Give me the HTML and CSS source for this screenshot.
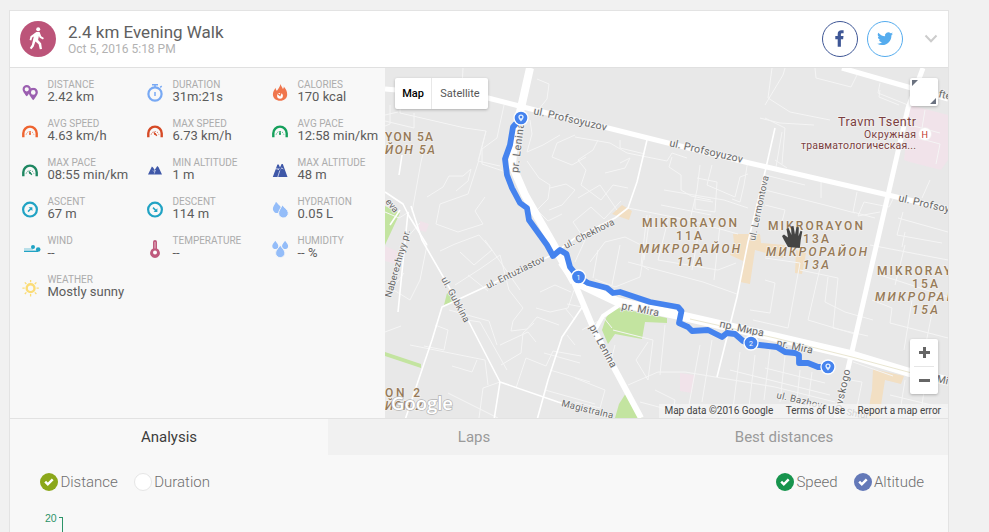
FILE: index.html
```html
<!DOCTYPE html>
<html lang="en">
<head>
    <meta charset="UTF-8">
    <meta name="viewport" content="width=device-width, initial-scale=1.0">
    <title>2.4 km Evening Walk</title>
    <link rel="stylesheet" href="styles.css">
</head>
<body class="page">
    <!-- icon sprite -->
    <svg class="sprite" width="0" height="0">
        <symbol id="i-gauge" viewBox="0 0 16 16">
            <path d="M1.3 13.200V9.300a6.700 6.700 0 0 1 13.400 0v3.900" fill="none" stroke="currentColor" stroke-width="2.400"/>
            <path d="M4.200 10.500a3.900 3.900 0 0 1 7.600 0" fill="none" stroke="currentColor" stroke-width="1" stroke-dasharray="1 1.400"/>
            <circle cx="8" cy="10" r="1"/>
        </symbol>
        <symbol id="i-check" viewBox="0 0 18 18">
            <path d="M5.200 8.600l2.600 2.700 4.900-4.900" fill="none" stroke="#fff" stroke-width="2.500"/>
        </symbol>
        <symbol id="i-pin" viewBox="0 0 10 12">
            <path fill-rule="evenodd" d="M5 0a4.400 4.400 0 0 0-4.400 4.400C.6 7.200 5 12 5 12s4.400-4.800 4.400-7.600A4.400 4.400 0 0 0 5 0zm0 2.300a2.200 2.200 0 1 1 0 4.400 2.200 2.200 0 0 1 0-4.400z"/>
        </symbol>
        <symbol id="i-drop" viewBox="0 0 10 12">
            <path d="M5 0C3.800 2.600.6 4.800.6 7.600a4.400 4.400 0 0 0 8.800 0C9.400 4.800 6.200 2.600 5 0z"/>
        </symbol>
    </svg>

    <div class="card">
        <header class="head">
            <div class="head__type">
                <svg viewBox="0 0 36 36" width="36" height="36" fill="#fff">
                    <circle cx="18.200" cy="8.300" r="2"/>
                    <path d="M16.300 10.900l3.300.2 1.600 4.200 2.700 1.700-.9 1.500-3.300-1.800-.8-1.700-.8 4.100 3 3.200.9 5.600-2.200.3-1.200-4.900-3.200-2.900-1.700 5-2.300 2.800-1.600-1.200 2.100-3.200 1.900-8.300-1.600.9-.9 3.100-1.700-.4.900-3.900z"/>
                </svg>
            </div>
            <div class="head__text">
                <h1 class="head__title">2.4 km Evening Walk</h1>
                <p class="head__date">Oct 5, 2016 5:18 PM</p>
            </div>
            <div class="head__share">
                <a class="share share--fb">
                    <svg viewBox="0 0 34 34" width="34" height="34" fill="currentColor"><path d="M14.700 24.800v-7.600h-2.400v-3.200h2.400v-2c0-2.600 1.500-3.800 3.700-3.800 1.100 0 1.900.1 2.200.1v3h-1.400c-1.100 0-1.300.5-1.300 1.300v1.400h2.600l-.4 3.200h-2.200v7.600z"/></svg>
                </a>
                <a class="share share--tw">
                    <svg viewBox="0 0 34 34" width="34" height="34" fill="currentColor"><path transform="translate(9.200 8.800) scale(.66)" d="M24 4.600a10 10 0 0 1-2.800.8 5 5 0 0 0 2.200-2.700c-1 .6-2 1-3.100 1.200a4.900 4.900 0 0 0-8.400 4.500C7.700 8.100 4.100 6.100 1.700 3.100a4.900 4.900 0 0 0 1.500 6.600c-.8 0-1.600-.2-2.200-.6 0 2.300 1.600 4.400 3.900 4.900-.7.200-1.500.2-2.200.1.600 1.900 2.400 3.400 4.600 3.400A9.900 9.900 0 0 1 0 19.500a14 14 0 0 0 7.500 2.200c9.100 0 14.300-7.700 14-14.600 1-.7 1.800-1.600 2.500-2.500z"/></svg>
                </a>
                <svg class="head__more" viewBox="0 0 14 10" width="14" height="10"><path d="M1.500 1.500L7 7.200l5.500-5.700" fill="none" stroke="#ccc" stroke-width="2"/></svg>
            </div>
        </header>

        <div class="summary">
            <div class="stats">
                <div class="stat">
                    <svg class="stat__ico" viewBox="0 0 16 16" fill="#9b5fb0"><use href="#i-pin" x="0" y="0" width="9.500" height="11.500"/><use href="#i-pin" x="6" y="2.500" width="10.500" height="13"/></svg>
                    <div class="stat__body"><p class="stat__label">Distance</p><p class="stat__value">2.42 km</p></div>
                </div>
                <div class="stat">
                    <svg class="stat__ico" viewBox="0 0 16 16" fill="none" stroke="#78a9f4"><circle cx="8" cy="9" r="6.600" stroke-width="2.200"/><path d="M5 -.3h6M8 0v2M13.200 2.300l1.500-1.200M8 7v4" stroke-width="1.500"/></svg>
                    <div class="stat__body"><p class="stat__label">Duration</p><p class="stat__value">31m:21s</p></div>
                </div>
                <div class="stat">
                    <svg class="stat__ico" viewBox="0 0 16 16"><path fill="#f0764d" d="M8.400-1c.4 2 2 3.200 2.500 5 .7-.5 1-1.500.9-2.500 1.700 2 3.600 4.700 3.400 8.200-.2 3.600-3 6-7 6s-7.100-2.300-7.300-6C.8 7.200 2.200 5 3.600 2.800c.1 1.300.5 2.400 1.300 3C6 4 8.200 2 8.400-1z"/><circle cx="8" cy="10.800" r="2.900" fill="#fff"/><path d="M6 9l2 1.500 1-2.500" stroke="#f0764d" fill="none"/></svg>
                    <div class="stat__body"><p class="stat__label">Calories</p><p class="stat__value">170 kcal</p></div>
                </div>
                <div class="stat">
                    <svg class="stat__ico stat__ico--orange"><use href="#i-gauge"/><path d="M8 7.300v3" stroke="currentColor"/></svg>
                    <div class="stat__body"><p class="stat__label">Avg speed</p><p class="stat__value">4.63 km/h</p></div>
                </div>
                <div class="stat">
                    <svg class="stat__ico stat__ico--red"><use href="#i-gauge"/><path d="M6.800 8.400l3 3.300" stroke="currentColor"/></svg>
                    <div class="stat__body"><p class="stat__label">Max speed</p><p class="stat__value">6.73 km/h</p></div>
                </div>
                <div class="stat">
                    <svg class="stat__ico stat__ico--green"><use href="#i-gauge"/><path d="M8 7.300v3" stroke="currentColor"/></svg>
                    <div class="stat__body"><p class="stat__label">Avg pace</p><p class="stat__value">12:58 min/km</p></div>
                </div>
                <div class="stat">
                    <svg class="stat__ico stat__ico--teal"><use href="#i-gauge"/><path d="M6.800 8.400l3 3.300" stroke="currentColor"/></svg>
                    <div class="stat__body"><p class="stat__label">Max pace</p><p class="stat__value">08:55 min/km</p></div>
                </div>
                <div class="stat">
                    <svg class="stat__ico" viewBox="0 0 16 16"><path fill="#3f58a8" d="M1 11.500L4.900 3.500l1.200 1 1.600 2.500L10.300 3l1.300 1.200L15 11.500z"/><path d="M6 7.500l1 1 1.300-1.500-1 3.500" fill="none" stroke="#dfe5f5" stroke-width=".7"/></svg>
                    <div class="stat__body"><p class="stat__label">Min altitude</p><p class="stat__value">1 m</p></div>
                </div>
                <div class="stat">
                    <svg class="stat__ico" viewBox="0 0 16 16"><path fill="#3f58a8" d="M.8 14L5.400 1.500h1.300L8 4.500l1.600-3.500h1.200L15.500 14z"/><path d="M3.700 6.500l1.500-1.200 1 1.700 1-2M8.600 6.200l1.400-1.400 1.200 1.400M7.800 7.500L5.800 14" fill="none" stroke="#dfe5f5" stroke-width=".8"/></svg>
                    <div class="stat__body"><p class="stat__label">Max altitude</p><p class="stat__value">48 m</p></div>
                </div>
                <div class="stat">
                    <svg class="stat__ico" viewBox="0 0 16 16" stroke="#21a3c4" fill="none"><circle cx="8" cy="7.600" r="6.900" stroke-width="2.200"/><path d="M6 9.600l3-3" stroke-width="1.500"/><path d="M6.600 5.200h3.800V9z" fill="#21a3c4" stroke="none"/></svg>
                    <div class="stat__body"><p class="stat__label">Ascent</p><p class="stat__value">67 m</p></div>
                </div>
                <div class="stat">
                    <svg class="stat__ico" viewBox="0 0 16 16" stroke="#21a3c4" fill="none"><circle cx="8" cy="7.600" r="6.900" stroke-width="2.200"/><path d="M6 5.600l3 3" stroke-width="1.500"/><path d="M6.600 10h3.800V6.200z" fill="#21a3c4" stroke="none"/></svg>
                    <div class="stat__body"><p class="stat__label">Descent</p><p class="stat__value">114 m</p></div>
                </div>
                <div class="stat">
                    <svg class="stat__ico" viewBox="0 0 16 16" fill="#94bdf9"><use href="#i-drop" x="0" y="-.5" width="9.500" height="11.500" transform="rotate(-8 5 5)"/><use href="#i-drop" x="5.600" y="2.800" width="11" height="13.200" stroke="#f7f7f7" stroke-width=".8" transform="rotate(-8 11 9)"/></svg>
                    <div class="stat__body"><p class="stat__label">Hydration</p><p class="stat__value">0.05 L</p></div>
                </div>
                <div class="stat">
                    <svg class="stat__ico" viewBox="0 0 16 16" fill="none" stroke="#21a3c4"><path d="M2 8h9" stroke-width="1" stroke="#7cc7da"/><path d="M2 10.300h14" stroke-width="1.400"/><circle cx="11" cy="6" r="2" fill="#21a3c4" stroke="none"/><circle cx="16.200" cy="8.500" r="2.300" fill="#21a3c4" stroke="none"/></svg>
                    <div class="stat__body"><p class="stat__label">Wind</p><p class="stat__value">--</p></div>
                </div>
                <div class="stat">
                    <svg class="stat__ico" viewBox="0 0 16 16"><path fill="#bf5a7d" d="M6 1a2 2 0 0 1 4 0v6.600a4.900 4.900 0 1 1-4 0z"/><circle cx="8" cy="11.600" r="2" fill="#fff"/><path d="M8 1v6.500" stroke="#e6b9c8" stroke-width="1"/></svg>
                    <div class="stat__body"><p class="stat__label">Temperature</p><p class="stat__value">--</p></div>
                </div>
                <div class="stat">
                    <svg class="stat__ico" viewBox="0 0 16 16" fill="#94bdf9"><use href="#i-drop" x="-.2" y="-.3" width="7" height="8.400"/><use href="#i-drop" x="9.600" y="-.3" width="7" height="8.400"/><use href="#i-drop" x="3" y="4" width="10.500" height="12.600" stroke="#f7f7f7" stroke-width=".8"/></svg>
                    <div class="stat__body"><p class="stat__label">Humidity</p><p class="stat__value">-- %</p></div>
                </div>
                <div class="stat">
                    <svg class="stat__ico" viewBox="0 0 16 16" fill="none" stroke="#fbdc76"><circle cx="8.600" cy="8.200" r="3.900" stroke-width="2.400"/><path d="M8.600 0v2.300M8.600 14.100v2.300M.4 8.200h2.300M14.500 8.200h2.300M2.800 2.400l1.600 1.600M12.800 12.400l1.600 1.600M2.800 14l1.600-1.600M12.800 4l1.600-1.600" stroke-width="1.300"/></svg>
                    <div class="stat__body"><p class="stat__label">Weather</p><p class="stat__value">Mostly sunny</p></div>
                </div>
            </div>

            <div class="map">
                <svg class="map__canvas" viewBox="385 68 563 350" width="563" height="350">
                    <rect x="385" y="68" width="563" height="350" fill="#e8e8e8"/>
                    <!-- parks and areas -->
                    <g fill="#c3e4a0">
                        <path d="M385 206l15 7-8 17-7 15z"/>
                        <path d="M385 352l36 12v4l-36-12z"/>
                        <path d="M444 305l3-12 5 3 1 6z"/>
                        <path d="M610 312l8-4 49 10v5l-22-1-3 17-27-5-7 10-6-14 4-12z"/>
                        <path d="M626 393l16 25h-27l4-14z"/>
                    </g>
                    <g fill="#f1e3ea">
                        <path d="M910 105l38 10v45l-7 10-31-8-6-2z"/>
                        <path d="M680 373l15 2-3 18-12-2zM420 221l9 3-3 8-8-2zM385 246l12 5v13l-12-3z"/>
                    </g>
                    <g fill="#f2dfc3">
                        <path d="M612 214l10-9 10 6-3 9z"/>
                        <path d="M733 234l27 0 1 9 24 2-2 13-28-8-5 34-10-2 3-21-13-6 4-12z"/>
                        <path d="M796 250l10 3-4 21-7-1z"/>
                        <path d="M873 369l31 7-3 8-16-4-6 38h-12l5-28z"/>
                    </g>
                    <!-- small streets -->
                    <g class="streets">
                        <path d="M390 105v19l-5 2M400 83v30l65 15 21 3-8 32-10 31-28 10-4 20 22 8 25-8-8-13 10-14M398 112l-13 3M414 113v15l-29-7M463 68l-2 38M486 131l-8 30 22 5M504 105l-7 33-15 11v15l24 8M424 150l-3 12-9 50M427 197l16-10 6-11 14 0 8-7-3 12-12 10"/>
                        <path d="M537 79l12 5-2 15-8 10M530 120l2 14-5 18 16-7 17-10M527 161l12 17 11 7-2 14-11 11 11 11 14-7M575 135l-18 8-5 14 20 8 14-8M550 188l16-4 9 6-13 15-13 5"/>
                        <path d="M385 212l14 6 10-6M405 240l15-17M427 245l-7 35-10 20-18-11 12-16M440 251l15-7 24-9 13 15-18 15-14-13M455 285l25-16 20-14 9 35 14 18-10 13-2 10 16-2 10-12 22 8M468 275l20 16M485 240l35 50M449 310l40 11 8 24M435 325l13 5-4 20-20-4M467 320l13 2 27 48M500 345l28-13 8 10M410 345l75 15 3 25M452 366l20 6 5-12M500 382l-17 6-4 30M385 332l16-6M448 393l50 25M501 365l20-12 2-20 11-10M516 388l10-30 20 8 7-15 28 5M544 353l36 10M550 370l40 12M545 390l50 14M536 308l14 4 18-4 6-18M567 304l15 3 13 30"/>
                        <path d="M540 292l15-7 16 7M590 262l15-20 20-5 20 10-5 30-25 10-20-8M647 215l-6 50 8 5M575 262l10-22-12-18 18-15 13 12 17-18"/>
                        <path d="M575 137l35 6 17 10 40 8 5-8 15 5M620 140v8l25 6M598 140l-5 10-15 10 8 10-5 15 20 15 12-15 15 3M578 198l22-13 17 25M605 173l20-5 5-10-10 5M672 157l-3 10 12 8v15l10 6 20 4M700 165l-3 25-7 30M697 178l20 4-2 30-20-3v-10l18 3M664 190l60 10 24 8M661 205l50 10M712 165l-5 20 28 12 5-20 8-3M748 160l-4 25-4 17-8-3M628 208l60 12 50 14M650 215l-6 45M668 220l-10 40 60 10 18-7M700 225l-8 45M720 225l-6 55M628 262l75 20 34 12M620 245l-8 40M598 250l-5 28"/>
                        <path d="M765 105l18-30 2-7M760 118l20 5 34 2M772 68l-4 30 22 14 40 8M815 68l1 10 35 9 6-12M880 83l-2 10 30 12M880 90l-1 7 20 8M765 118l20 10-3 36M782 132l-6 35M775 160l12 8M895 195l-6 12-25-5-6 14 22-4M765 175l40 10M765 190l60 15 30 8M821 178v20M765 205l20 5-5 20M857 192l-4 20 22 6M903 212l-6 23 45 8M905 232l-3 15M898 218l50 14M930 180l-8 18"/>
                        <path d="M765 258l35 5-12 65-35-8M800 270l38 8-5 50 35 8M820 268l-12 52 50 15M828 277l-3 25 20 10 28 8M870 245l78 15M872 300l20 8-2 15 58 15M880 275l68 22M905 245l-10 40M912 300l-8 50M935 298l-10 50M765 280l10 3-5 30-20-3"/>
                        <path d="M613 330l40 10-5 40-12-20 12-18M628 385l30-13 27 0 90 15 60 15M665 325l-5 50M700 345l-12 65M712 340l-10 62M655 390l20 10-3 18M640 402l60 16M740 352l-8 65M755 355l-7 60M770 350l-6 50M785 356l-5 46M800 370l-5 50M812 372l-5 40M765 368l60 15M730 370l100 25M615 345l-5 20M575 378l30 12-5 18-25-6"/>
                        <path d="M853 362l40 14M850 380l12 2-6 30M905 380l-6 38M925 385l-5 33M890 395l58 14M575 320l-10-12M582 330l22-12 8 10M575 345l-8-10M910 125l30 8M918 138l22 6-4 20M925 110l-5 30"/>
                    </g>
                    <!-- secondary roads -->
                    <g class="roads roads--mid">
                        <path d="M385 192l18 12 6 12 18 29M402 155l-3 20"/>
                        <path d="M411 206l11 34 46 80 32 62 58 20 85 26"/>
                        <path d="M405 420l27-80 10-33 43-20 67-32 23-17 40-20 13-10 9-26 10-42"/>
                        <path d="M585 303l-23 34-14 43-11 40M500 382l-6 38"/>
                        <path d="M775 128l-10 44-17 70-11 55-20 80"/>
                        <path d="M390 225l10-15M408 212l-10 100"/>
                    </g>
                    <!-- main roads -->
                    <g class="roads roads--main">
                        <path d="M385 89l103 9 47 12 73 18 60 15 77 19 143 33 60 14" stroke-width="5"/>
                        <path d="M842 68l66 19 40 12" stroke-width="5"/>
                        <path d="M923 68l-15 40-20 87-38 165-14 60" stroke-width="5"/>
                        <path d="M530 68l-9 40-6 25-3 32 13 30 27 47 22 40 21 50 46 86" stroke-width="6"/>
                        <path d="M530 68l-9 40-6 25-3 32 13 30 27 47 22 40" stroke-width="8"/>
                        <path d="M562 262l14 20 42 20 64 14 93 21 77 18 56 17 45 10" stroke-width="9"/>
                        <path d="M595 330l8-14 15-10" stroke-width="4"/>
                    </g>
                    <path d="M690 319l85 19 77 19 56 15 40 9" fill="none" stroke="#e3dfc5" stroke-width=".8"/>

                    <!-- district names -->
                    <g class="district">
                        <text x="385" y="141" textLength="48">YON 5A</text>
                        <text x="385" y="154" textLength="50" font-style="italic">ЙОН 5А</text>
                        <text x="642" y="227" textLength="95">MIKRORAYON</text>
                        <text x="676" y="240" textLength="26">11A</text>
                        <text x="639" y="253" textLength="101" font-style="italic">МИКРОРАЙОН</text>
                        <text x="677" y="266" textLength="26" font-style="italic">11А</text>
                        <text x="768" y="230" textLength="95">MIKRORAYON</text>
                        <text x="803" y="243" textLength="26">13A</text>
                        <text x="766" y="256" textLength="101" font-style="italic">МИКРОРАЙОН</text>
                        <text x="803" y="269" textLength="26" font-style="italic">13А</text>
                        <text x="877" y="275" textLength="95">MIKRORAYON</text>
                        <text x="912" y="288" textLength="26">15A</text>
                        <text x="875" y="301" textLength="101" font-style="italic">МИКРОРАЙОН</text>
                        <text x="912" y="314" textLength="26" font-style="italic">15А</text>
                        <text x="385" y="397" textLength="35">ON 2</text>
                        <text x="385" y="410" textLength="37" font-style="italic">ЙОН 2</text>
                    </g>
                    <g class="poi" text-anchor="end">
                        <text x="916" y="126" font-size="12.500" textLength="78">Travm Tsentr</text>
                        <text x="916" y="137.500" font-size="10.500" textLength="52">Окружная</text>
                        <text x="916" y="149" font-size="10.500" textLength="115">травматологическая...</text>
                        <circle cx="925" cy="134" r="6" fill="#fff"/>
                        <text x="928" y="137.500" font-size="9" fill="#c0392b" stroke="none">H</text>
                    </g>

                    <!-- street names -->
                    <g class="street">
                        <text transform="translate(533 114) rotate(13)" textLength="75">ul. Profsoyuzov</text>
                        <text transform="translate(669 146) rotate(13)" textLength="75">ul. Profsoyuzov</text>
                        <text transform="translate(898 201) rotate(13)" textLength="75">ul. Profsoyuzov</text>
                        <text transform="translate(938 97) rotate(13)">fteyu</text>
                        <text transform="translate(518 173) rotate(-83)" textLength="50">pr. Lenina</text>
                        <text transform="translate(566 249) rotate(-27)" textLength="55" font-size="9.500">ul. Chekhova</text>
                        <text transform="translate(488 289) rotate(-26)" textLength="64" font-size="9.500">ul. Entuziastov</text>
                        <text transform="translate(441 279) rotate(62)" textLength="50" font-size="9.500">ul. Gubkina</text>
                        <text transform="translate(391 298) rotate(-74)" textLength="70" font-size="9.500">Naberezhnyy pr.</text>
                        <text transform="translate(385 202) rotate(50)" font-size="9.500">eva</text>
                        <text transform="translate(755 241) rotate(-78)" textLength="66" font-size="9.500">ul. Lermontova</text>
                        <text transform="translate(621 309) rotate(11)" textLength="38">pr. Mira</text>
                        <text transform="translate(719 327) rotate(12)" textLength="45">пр. Мира</text>
                        <text transform="translate(776 346) rotate(12)" textLength="37">pr. Mira</text>
                        <text transform="translate(936 382) rotate(12)">Mira</text>
                        <text transform="translate(589 327) rotate(62)" textLength="47">pr. Lenina</text>
                        <text transform="translate(561 406) rotate(14)" font-size="9.500" textLength="53">Magistralna</text>
                        <text transform="translate(776 398) rotate(13)" font-size="9.500" textLength="52">ul. Bazhova</text>
                        <text transform="translate(841 411) rotate(-77)" textLength="42">ovskogo</text>
                        <text transform="translate(846 415) rotate(10)" font-size="9.500">Shtur</text>
                    </g>

                    <!-- walked track -->
                    <path class="track" d="M521 118l-8 9-3 18-5 14 2 16 5 13 8 15 7 5 2 12 18 25 6 11 7-6 6.500 4 3.500 13 8 10 10 6 19 5 6 5 7-1 30 10 28 5 3.500 4-2.500 12 9 4 4 4 16-1 14 7 5-4 8 1 8 7 8 3 26 3 8 5 10 1 4 2v8h9l10 4 10 0"/>
                    <g class="marks">
                        <circle cx="521" cy="118" r="7"/>
                        <circle cx="578.500" cy="277" r="7"/>
                        <circle cx="751" cy="343" r="7"/>
                        <circle cx="828" cy="367" r="7"/>
                        <use href="#i-pin" x="518" y="114" width="6" height="8" class="marks__pin"/>
                        <use href="#i-pin" x="825" y="363" width="6" height="8" class="marks__pin"/>
                        <text x="578.500" y="279.500">1</text>
                        <text x="751" y="345.500">2</text>
                    </g>
                    <text x="391" y="410" class="glogo" textLength="62" lengthAdjust="spacingAndGlyphs">Google</text>
                    <!-- grab cursor -->
                    <path fill="#444" d="M788 247l-4-7-2-4 2-1.500 4 3-1.500-8.500 2-1 3 7-.5-8.500 2.500-.5 1.500 8.500 1.500-7.500 2.300.3-.3 9 2-5.500 1.800.7-1.500 8-1 8.500z"/>
                </svg>

                <div class="map__types">
                    <span class="map__type map__type--active">Map</span>
                    <span class="map__type">Satellite</span>
                </div>
                <div class="map__full">
                    <svg width="28" height="28" viewBox="0 0 28 28" fill="#6b7280"><path d="M2 2h6L2 8zM26 20v6h-6z"/></svg>
                </div>
                <div class="map__zoom">
                    <span class="zoom zoom--in"></span>
                    <span class="zoom zoom--out"></span>
                </div>
                <div class="map__copy">
                    <span>Map data ©2016 Google</span>
                    <span>Terms of Use</span>
                    <span>Report a map error</span>
                </div>
            </div>
        </div>

        <nav class="tabs">
            <a class="tab tab--active">Analysis</a>
            <a class="tab">Laps</a>
            <a class="tab">Best distances</a>
        </nav>

        <div class="filters">
            <div class="filters__group">
                <label class="check"><svg class="check__box check__box--olive"><use href="#i-check"/></svg>Distance</label>
                <label class="check"><svg class="check__box check__box--empty"></svg>Duration</label>
            </div>
            <div class="filters__group">
                <label class="check"><svg class="check__box check__box--green"><use href="#i-check"/></svg>Speed</label>
                <label class="check"><svg class="check__box check__box--blue"><use href="#i-check"/></svg>Altitude</label>
            </div>
        </div>

        <div class="chart">
            <span class="chart__tick">20</span>
            <div class="chart__axis"></div>
        </div>
    </div>
</body>
</html>
```

FILE: styles.css
```css
*, ::after, ::before {
    box-sizing: border-box;
}
body{
    margin: 0;
    font-family: Roboto, sans-serif;
}
h1,p{
    margin: 0;
    font-weight: 400;
}
.page{
    background: #f1f1f1;
    padding: 10px 0 0 9px;
    height: 532px;
    overflow: hidden;
}
.sprite{
    position: absolute;
}
.card{
    width: 940px;
    height: 522px;
    border: 1px solid #e3e3e3;
    border-bottom: 0;
    background: #f8f8f8;
}

.head{
    display: flex;
    align-items: center;
    height: 57px;
    padding: 0 10px;
    background: #fff;
    border-bottom: 1px solid #e0e0e0;
}
.head__type{
    width: 36px;
    height: 36px;
    border-radius: 50%;
    background: #bc5479;
}
.head__text{
    margin-left: 12px;
    padding-bottom: 1px;
}
.head__title{
    font-size: 17px;
    line-height: 20px;
    color: #606060;
}
.head__date{
    font-size: 12px;
    line-height: 14px;
    color: #b2b2b2;
}
.head__share{
    display: flex;
    align-items: center;
    gap: 9px;
    margin-left: auto;
}
.head__more{
    margin-left: 12px;
}
.share{
    width: 36px;
    height: 36px;
    border: 1px solid;
    border-radius: 50%;
}
.share svg{
    display: block;
}
.share--fb{
    color: #3f5796;
}
.share--tw{
    color: #55acee;
}

.summary{
    display: flex;
    height: 351px;
    border-bottom: 1px solid #e2e2e2;
}
.stats{
    width: 375px;
    padding: 10px 0 0 12px;
    display: grid;
    grid-template-columns: repeat(3, 125px);
    grid-auto-rows: 26px;
    row-gap: 13px;
    align-content: start;
}
.stat{
    display: flex;
    gap: 9.5px;
}
.stat__ico{
    flex-shrink: 0;
    width: 16px;
    height: 16px;
    margin-top: 7px;
    overflow: visible;
    stroke-width: 1.4;
}
.stat__ico--orange{
    color: #ee6430;
    fill: #ee6430;
}
.stat__ico--red{
    color: #d64a26;
    fill: #d64a26;
}
.stat__ico--green{
    color: #16a05c;
    fill: #16a05c;
}
.stat__ico--teal{
    color: #1f8762;
    fill: #1f8762;
}
.stat__label{
    font-size: 10px;
    line-height: 13px;
    color: #acacac;
    text-transform: uppercase;
    white-space: nowrap;
}
.stat__value{
    margin-top: -1px;
    font-size: 13px;
    line-height: 13px;
    color: #5c5c5c;
    white-space: nowrap;
}

.map{
    position: relative;
    width: 563px;
    height: 350px;
    overflow: hidden;
}
.map__canvas{
    display: block;
}
.streets{
    fill: none;
    stroke: #f5f5f5;
    stroke-width: 1;
}
.roads{
    fill: none;
    stroke: #fff;
    stroke-linejoin: round;
}
.roads--mid{
    stroke-width: 1.6;
}
.district{
    font-size: 12px;
    font-weight: 500;
    fill: #967a58;
    stroke: #f3f0ec;
    stroke-width: 1.5px;
    paint-order: stroke;
}
.poi{
    fill: #7a3f3f;
    stroke: #f3f0f0;
    stroke-width: 1.5px;
    paint-order: stroke;
}
.street{
    font-size: 10.5px;
    fill: #686868;
    stroke: #f2f2f2;
    stroke-width: 1.5px;
    paint-order: stroke;
}
.track{
    fill: none;
    stroke: #4583ee;
    stroke-width: 5.8;
    stroke-linejoin: round;
}
.marks circle{
    fill: #4583ee;
    stroke: #fff;
    stroke-width: 1.3;
}
.marks text{
    font-size: 7px;
    fill: #fff;
    text-anchor: middle;
}
.marks__pin{
    fill: #e3f0ff;
}
.glogo{
    font-family: "Open Sans", sans-serif;
    font-size: 18px;
    font-weight: 600;
    fill: #fff;
    stroke: #b5b5b5;
    stroke-width: 1.4px;
    paint-order: stroke;
}

.map__types,
.map__full,
.map__zoom{
    position: absolute;
    background: #fff;
    border-radius: 2px;
    box-shadow: 0 1px 3px rgba(0, 0, 0, .25);
}
.map__types{
    top: 10px;
    left: 10px;
    display: flex;
    height: 31px;
    font-size: 11px;
    line-height: 31px;
}
.map__type{
    width: 56px;
    text-align: center;
    color: #565656;
}
.map__type--active{
    width: 37px;
    border-right: 1px solid #e8e8e8;
    color: #000;
    font-weight: 500;
}
.map__full{
    top: 10px;
    right: 10px;
    width: 28px;
    height: 28px;
}
.map__zoom{
    right: 10px;
    bottom: 24px;
    width: 28px;
    height: 55px;
}
.zoom{
    display: flex;
    align-items: center;
    justify-content: center;
    height: 27px;
}
.zoom::before{
    content: "";
    width: 11px;
    height: 11px;
    background: linear-gradient(#666, #666) center / 11px 3px no-repeat;
}
.zoom--in::before{
    background: linear-gradient(#666, #666) center / 11px 3px no-repeat, linear-gradient(#666, #666) center / 3px 11px no-repeat;
}
.zoom--out{
    margin: 0 4px;
    border-top: 1px solid #e6e6e6;
}
.map__copy{
    position: absolute;
    right: 0;
    bottom: 0;
    display: flex;
    gap: 12.5px;
    height: 14px;
    padding: 0 7px 0 5px;
    font-size: 10px;
    line-height: 14px;
    color: #444;
    background: rgba(245, 245, 245, .75);
    white-space: nowrap;
}

.tabs{
    display: grid;
    grid-template-columns: 318px 292px 328px;
    height: 34px;
    line-height: 36px;
    font-size: 15px;
    text-align: center;
}
.tab{
    background: #f1f1f1;
    color: #9a9a9a;
}
.tab--active{
    background: #f8f8f8;
    color: #3c3c3c;
}

.filters{
    display: flex;
    justify-content: space-between;
    padding: 20px 24px 0 30px;
}
.filters__group{
    display: flex;
    gap: 16px;
}
.check{
    display: flex;
    align-items: center;
    gap: 2.4px;
    height: 18px;
    font-size: 15px;
    font-weight: 300;
    color: #6f6f6f;
}
.check__box{
    width: 18px;
    height: 18px;
    border-radius: 50%;
}
.check__box--olive{
    background: #8ba71a;
}
.check__box--empty{
    background: #fff;
    border: 1px solid #e6e6e6;
}
.check__box--green{
    background: #17944d;
}
.check__box--blue{
    background: #6479b8;
}

.chart{
    display: flex;
    align-items: flex-start;
    gap: 2px;
    padding: 26px 0 0 35px;
}
.chart__tick{
    margin-top: -5px;
    font-family: "Liberation Sans", sans-serif;
    font-size: 10.5px;
    line-height: 13px;
    color: #2c9468;
}
.chart__axis{
    width: 4px;
    height: 15px;
    border: solid #2c9468;
    border-width: 1px 1px 0 0;
}
```
